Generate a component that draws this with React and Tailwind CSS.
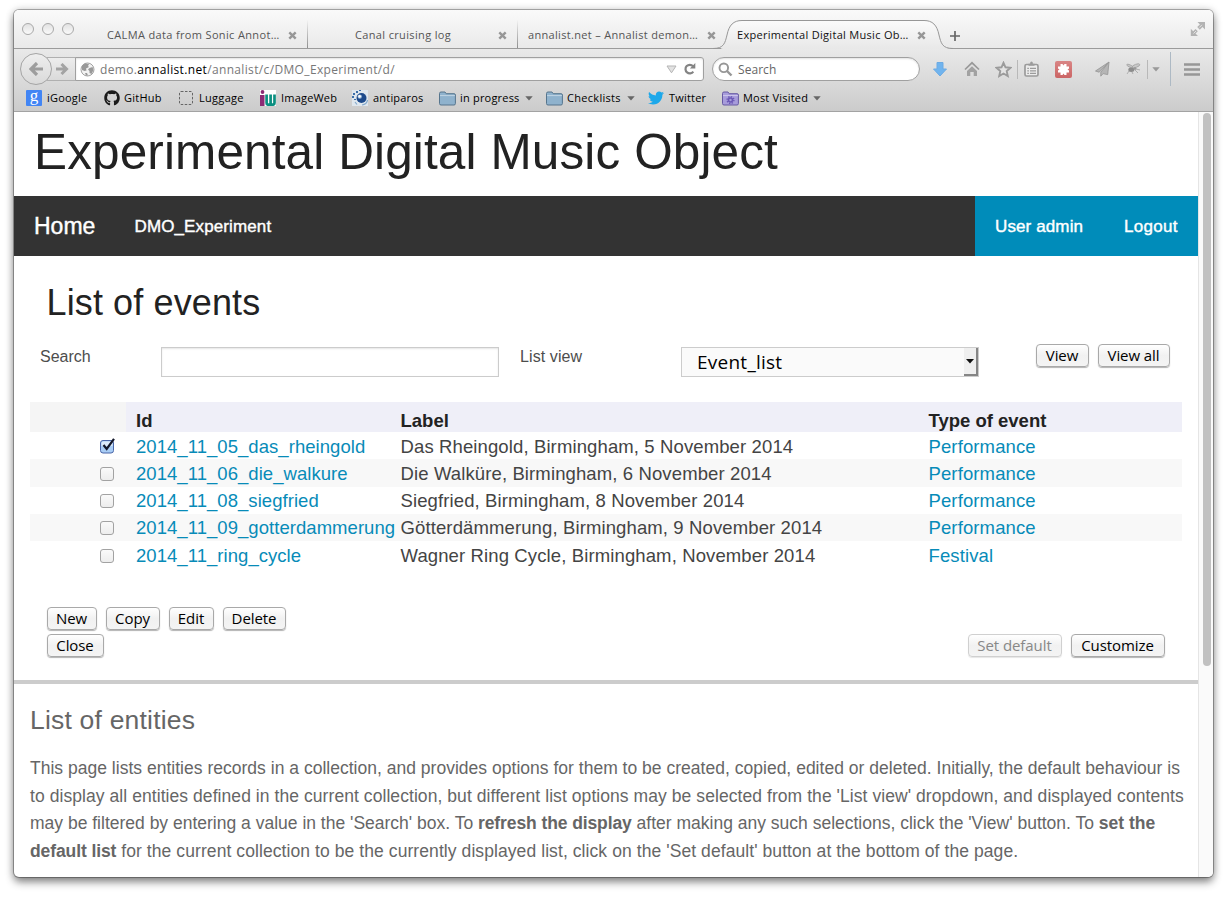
import React from "react";
import { FaGithub, FaTwitter } from "react-icons/fa";

const FolderIcon = ({ fill, stroke, gear }) => (
  <svg width="17" height="15" viewBox="0 0 17 15" className="shrink-0">
    <path d="M.5 12.5v-10q0-1.500 1.500-1.500h4l1.200 1.700H15q1.400 0 1.400 1.300v8.500q0 1.500-1.400 1.500H2q-1.500 0-1.500-1.500z" fill={fill} stroke={stroke} />
    <path d="M1 4.600h15" stroke="#fff" strokeOpacity=".45" />
    {gear && (
      <g fill="none" stroke="#6b58b5">
        <circle cx="8.500" cy="9" r="2" strokeWidth="1.600" />
        <circle cx="8.500" cy="9" r="3.400" strokeWidth="1.400" strokeDasharray="1.400 1.250" />
      </g>
    )}
  </svg>
);

const Caret = () => (
  <svg width="8" height="5" viewBox="0 0 8 5" className="shrink-0">
    <path d="M.3 .3h7.400L4 4.600z" fill="#666" />
  </svg>
);

const CloseX = () => (
  <svg width="9" height="9" viewBox="0 0 9 9" className="shrink-0">
    <path d="M1.300 1.300l6.400 6.400M7.700 1.300L1.300 7.700" stroke="#979797" strokeWidth="2.400" />
  </svg>
);

const Light = () => (
  <span className="h-3 w-3 rounded-full border border-[#a9a9a9] bg-linear-to-b from-[#e2e2e2] to-[#fafafa]" />
);

const TabDivider = () => (
  <span className="-mt-[12px] ml-auto h-[38px] w-px shrink-0 bg-linear-to-b from-transparent from-25% to-[#8f8f8f]" />
);

function TabStrip() {
  return (
    <div className="relative flex h-[39px] shrink-0 items-stretch border-b border-[#9b9b9b] text-[11px] text-[#555]">
      <div className="flex w-[93px] shrink-0 gap-2 pt-[13px] pl-[8px]">
        <Light /><Light /><Light />
      </div>
      <div className="flex w-[201px] shrink-0 items-center pt-[12px]">
        <span className="w-[181px] whitespace-nowrap tracking-[0.35px]">CALMA data from Sonic Annot…</span>
        <CloseX />
        <TabDivider />
      </div>
      <div className="flex w-[210px] shrink-0 items-center pt-[12px] pl-[47px]">
        <span className="w-[143px] whitespace-nowrap tracking-[0.35px]">Canal cruising log</span>
        <CloseX />
        <TabDivider />
      </div>
      <div className="flex w-[203px] shrink-0 items-center pt-[12px] pl-[10px]">
        <span className="w-[179px] whitespace-nowrap tracking-[0.32px]">annalist.net – Annalist demon…</span>
        <CloseX />
      </div>
      <div className="relative -ml-[8px] flex w-[240px] shrink-0 items-center pt-[12px] pl-[24px] text-[#111]">
        <svg width="246" height="39" viewBox="0 0 246 39" className="absolute top-0 left-0">
          <defs>
            <linearGradient id="tab" x1="0" y1="0" x2="0" y2="1">
              <stop offset="0" stopColor="#fbfbfb" />
              <stop offset="1" stopColor="#e8e8e8" />
            </linearGradient>
          </defs>
          <path d="M8 39v-.5C14 38 13 32 15 25C17 15 20.500 10.500 29 10.500H211C219.500 10.500 224 15 226 25C228 33 229 38.500 238 38.500V39z" fill="url(#tab)" />
          <path d="M0 38.500C11 38.500 12 33 14 25C16 15 20.500 10.500 29 10.500H211C219.500 10.500 224 15 226 25C228 33 229 38.500 240 38.500" fill="none" stroke="#979797" />
        </svg>
        <span className="relative w-[180px] whitespace-nowrap tracking-[0.3px]">Experimental Digital Music Ob…</span>
        <span className="relative"><CloseX /></span>
      </div>
      <svg width="10" height="10" viewBox="0 0 10 10" className="mt-[21px] -ml-[3px]">
        <path d="M5 0v10M0 5h10" stroke="#666" strokeWidth="1.700" />
      </svg>
      <svg width="16" height="16" viewBox="0 0 16 16" className="mt-[11px] mr-[7px] ml-auto">
        <path d="M7.500 1H15v7.500l-2.500-2.500L9.800 8.700 7.200 6.100l2.700-2.700zM8 15H.8V7.800L3.200 10.200 5.500 8l2.300 2.300L5.500 12.600z" fill="#b3b3b3" />
        <path d="M12 3.800L9.300 6.500M3.500 12.500L6 10" stroke="#e4e4e4" />
      </svg>
    </div>
  );
}

function AddressBar() {
  return (
    <div className="flex h-[40px] shrink-0 items-center text-[12px]">
      <div className="relative z-10 ml-[6px] flex h-8 w-8 shrink-0 items-center justify-center rounded-full border border-[#a5a5a5] bg-linear-to-b from-[#eee] to-[#dadada]">
        <svg width="15" height="14" viewBox="0 0 15 14">
          <path d="M14 7H3M8 1L2 7l6 6" fill="none" stroke="#9d9d9d" strokeWidth="3.200" />
        </svg>
      </div>
      <div className="-ml-[5px] flex h-6 w-[29px] shrink-0 items-center justify-end border-y border-[#b0b0b0] bg-linear-to-b from-[#ededed] to-[#dadada] pr-[7px]">
        <svg width="13" height="12" viewBox="0 0 13 12">
          <path d="M0 6h9M5.500 1l5 5-5 5" fill="none" stroke="#a3a3a3" strokeWidth="3" />
        </svg>
      </div>
      <div className="-ml-px flex h-6 w-[629px] shrink-0 items-center rounded-r-[3px] border border-[#a0a0a0] bg-white pl-[4px] shadow-[inset_0_1px_2px_rgba(0,0,0,0.12)]">
        <svg width="15" height="15" viewBox="0 0 15 15" className="shrink-0">
          <circle cx="7.500" cy="7.500" r="6.500" fill="#f2f2f2" stroke="#a3a3a3" />
          <path d="M2 4l3-2.500 4 .5-1 2 1 1-3 1.500.500 2-2 .5L2 8zM9.500 6l3-1 1 3-2 4-2-1V9L8 7.500zM5 11l2 0 1 2.500H6z" fill="#999" />
        </svg>
        <span className="ml-[5px] w-[566px] pt-px whitespace-nowrap tracking-[0.350px] text-[#777]">
          demo.<span className="text-black">annalist.net</span>/annalist/c/DMO_Experiment/d/
        </span>
        <svg width="11" height="9" viewBox="0 0 11 9" className="shrink-0">
          <path d="M1 1h9L5.500 7.800z" fill="#e2e2e2" stroke="#b5b5b5" />
        </svg>
        <svg width="14" height="14" viewBox="0 0 14 14" className="ml-[6px] shrink-0">
          <path d="M10.300 9.600A4.300 4.300 0 1 1 10 4.200" fill="none" stroke="#848484" strokeWidth="2.200" />
          <path d="M12.300 1v5.600H6.900z" fill="#848484" />
        </svg>
      </div>
      <div className="ml-[8px] flex h-6 w-[208px] shrink-0 items-center rounded-full border border-[#a0a0a0] bg-white pl-[5px] text-[#666] shadow-[inset_0_1px_2px_rgba(0,0,0,0.12)]">
        <svg width="15" height="15" viewBox="0 0 15 15" className="shrink-0">
          <circle cx="5.800" cy="5.800" r="4.300" fill="none" stroke="#979797" strokeWidth="1.900" />
          <path d="M9 9l4.500 4.500" stroke="#979797" strokeWidth="2.400" />
        </svg>
        <span className="ml-[5px] pt-px tracking-[0.050px]">Search</span>
      </div>
      <svg width="14" height="15" viewBox="0 0 14 15" className="ml-[13px] shrink-0">
        <path d="M4 .5h6V7h3.500L7 14 .5 7H4z" fill="#71b4ee" stroke="#6cabe4" />
      </svg>
      <svg width="16" height="16" viewBox="0 0 16 16" className="ml-[17px] shrink-0">
        <path d="M1 8.500L8 1.800l7 6.700" fill="none" stroke="#999" strokeWidth="1.700" />
        <path d="M3 10L8 5.200l5 4.800V15H9.700v-4H6.300v4H3z" fill="#a2a2a2" />
      </svg>
      <svg width="17" height="17" viewBox="0 0 17 17" className="ml-[15px] shrink-0">
        <path d="M8.500 1.800l2 4.500 4.900.5-3.700 3.300 1.100 4.900-4.300-2.500L4.200 15l1.100-4.900L1.600 6.800l4.900-.5z" fill="#e4e4e4" stroke="#9b9b9b" strokeWidth="1.900" />
      </svg>
      <span className="ml-[5px] h-[19px] w-px shrink-0 bg-[#b8b8b8]" />
      <svg width="15" height="16" viewBox="0 0 15 16" className="ml-[6px] shrink-0">
        <rect x="1" y="3.500" width="13" height="11.500" rx="1.500" fill="#ececec" stroke="#9b9b9b" strokeWidth="1.700" />
        <path d="M4.500 4.800V2.800h1.600Q6 .5 7.500.5T8.900 2.800h1.600v2z" fill="#9b9b9b" />
        <path d="M3.300 7.300h1.600M6 7.300h6M3.300 9.800h1.600M6 9.800h6M3.300 12.300h1.600M6 12.300h6" stroke="#9b9b9b" strokeWidth="1.300" />
      </svg>
      <span className="ml-[16px] flex h-[17px] w-[17px] shrink-0 items-center justify-center rounded-[2px] bg-linear-to-b from-[#d98585] to-[#cb6565]">
        <svg width="11" height="11" viewBox="0 0 11 11">
          <path d="M2.500 0h2l1 1.500 1-1.500h2v2.500H11v2L9.500 5.500 11 6.500v2H8.500V11h-2l-1-1.500-1 1.500h-2V8.500H0v-2l1.500-1L0 4.500v-2h2.500z" fill="#fff" />
        </svg>
      </span>
      <svg width="15" height="16" viewBox="0 0 15 16" className="ml-[23px] shrink-0">
        <path d="M14 1L.5 10l3.700 1.200zM14 1L5.800 11.200v4l2.300-2.600 4.600 1z" fill="#b5b5b5" stroke="#999" strokeWidth=".9" />
      </svg>
      <svg width="17" height="14" viewBox="0 0 17 14" className="ml-[15px] shrink-0">
        <g fill="none" stroke="#a2a2a2" strokeWidth=".8">
          <ellipse cx="11" cy="3.800" rx="4" ry="1.500" transform="rotate(-20 11 3.800)" fill="#c8c8c8" />
          <ellipse cx="5" cy="4" rx="3.300" ry="1.100" transform="rotate(25 5 3.500)" fill="#c8c8c8" />
          <path d="M4 9l-2 3M7 10l1 2M10 8l3 3M11 7l4 1" />
        </g>
        <ellipse cx="6.300" cy="7.800" rx="3" ry="2.200" fill="#8c8c8c" />
        <circle cx="10" cy="6.600" r="1.400" fill="#999" />
      </svg>
      <span className="ml-[5px] h-[19px] w-px shrink-0 bg-[#b8b8b8]" />
      <svg width="8" height="5" viewBox="0 0 8 5" className="ml-[4px] shrink-0"><path d="M.3 .3h7.400L4 4.500z" fill="#999" /></svg>
      <span className="ml-[10px] h-[34px] w-px shrink-0 bg-[#adb9c4]" />
      <svg width="16" height="13" viewBox="0 0 16 13" className="ml-[13px] shrink-0">
        <path d="M0 1.500h16M0 6.500h16M0 11.500h16" stroke="#979797" strokeWidth="2.400" />
      </svg>
    </div>
  );
}

function Bookmarks() {
  return (
    <div className="flex h-[23px] shrink-0 items-center border-b border-[#a3a3a3] pb-[4px] text-[11px] tracking-[0.2px] whitespace-nowrap text-black">
      <div className="flex w-[78px] shrink-0 items-center gap-[5px] pl-[12px]">
        <span className="flex h-4 w-4 shrink-0 items-center justify-center rounded-[1px] bg-[#4285f4] pb-[4px] font-['Liberation_Serif',serif] text-[17px] leading-4 text-white">g</span>
        iGoogle
      </div>
      <div className="flex w-[75px] shrink-0 items-center gap-[4px] pl-[12px] tracking-[0.250px]">
        <FaGithub className="h-4 w-4 shrink-0 text-[#1b1b1b]" />GitHub
      </div>
      <div className="flex w-[80px] shrink-0 items-center gap-[6px] pl-[12px] tracking-[0.300px]">
        <svg width="14" height="14" viewBox="0 0 14 14" className="shrink-0"><rect x=".5" y=".5" width="13" height="13" rx="1.500" fill="none" stroke="#666" strokeDasharray="2.500 1.500" /></svg>
        Luggage
      </div>
      <div className="flex w-[92px] shrink-0 items-center gap-[5px] pl-[13px]">
        <svg width="16" height="16" viewBox="0 0 16 16" className="shrink-0">
          <rect width="16" height="16" fill="#fff" />
          <circle cx="2.500" cy="2" r="1.900" fill="#8c2b75" />
          <path d="M0 5h4.500v11H0z" fill="#8c2b75" />
          <path d="M6.600 4.500V13Q6.600 14.700 8.200 14.700H9Q10.600 14.700 10.600 13V4.500M10.600 13Q10.600 14.700 12 14.700H12.800Q14.500 14.700 14.500 13V4.500" fill="none" stroke="#0b8f80" strokeWidth="2.700" />
        </svg>
        ImageWeb
      </div>
      <div className="flex w-[88px] shrink-0 items-center gap-[5px] pl-[13px]">
        <svg width="16" height="16" viewBox="0 0 16 16" className="shrink-0">
          <rect width="16" height="16" fill="#dfe7ee" />
          <circle cx="9.500" cy="8" r="5" fill="#1d4a8c" />
          <circle cx="7.800" cy="6.600" r="2.200" fill="#8fb0d2" />
          <circle cx="7.600" cy="6.400" r="1.300" fill="#fff" />
          <path d="M1 3h2v2H1zM4 1h2v2H4zM0 6h2v2H0zM2 9h2v1H2zM7 0h2v1H7z" fill="#3d6fa8" />
          <path d="M3 12l2 2.500M10 15q5-1 5.500-5" fill="none" stroke="#84a9cc" strokeWidth="1.200" />
        </svg>
        antiparos
      </div>
      <div className="flex w-[107px] shrink-0 items-center gap-[4px] pl-[12px]">
        <FolderIcon fill="#8fb2cd" stroke="#56758d" />
        <span className="w-[61px] tracking-[0.200px]">in progress</span><Caret />
      </div>
      <div className="flex w-[102px] shrink-0 items-center gap-[4px] pl-[12px]">
        <FolderIcon fill="#8fb2cd" stroke="#56758d" />
        <span className="w-[56px] tracking-[0.300px]">Checklists</span><Caret />
      </div>
      <div className="flex w-[74px] shrink-0 items-center gap-[5px] pl-[12px]">
        <FaTwitter className="h-4 w-4 shrink-0 text-[#1da8ea]" />Twitter
      </div>
      <div className="flex shrink-0 items-center gap-[4px] pl-[12px]">
        <FolderIcon fill="#a79cdb" stroke="#6659a3" gear />
        <span className="w-[66px] tracking-[0.200px]">Most Visited</span><Caret />
      </div>
    </div>
  );
}

const Button = ({ children, className, disabled }) => (
  <button
    disabled={disabled}
    className={
      "flex h-[23px] shrink-0 items-center justify-center rounded-[4px] border border-[#a9a9a9] bg-linear-to-b from-white via-[#f1f1f1] via-50% to-[#f4f4f4] pr-px pb-px font-['Open_Sans','Noto_Sans',sans-serif] text-[15px] leading-5 tracking-[-0.080px] whitespace-nowrap text-black shadow-[0_1px_1px_rgba(0,0,0,0.3)] disabled:border-[#d0d0d0] disabled:text-[#888] disabled:shadow-[0_1px_1px_rgba(0,0,0,0.1)] " +
      className
    }
  >
    {children}
  </button>
);

const Checkbox = ({ checked }) =>
  checked ? (
    <svg width="17" height="17" viewBox="0 0 17 17" className="-mt-[3px] -mr-[2px] shrink-0">
      <rect x="1.500" y="3.500" width="13" height="12.500" rx="2.500" fill="#a9cdf5" stroke="#4a66a8" />
      <path d="M2.500 6q0-1.500 2-1.500h7q2 0 2 1.500v3h-11z" fill="#dcebfb" />
      <path d="M4.500 8l3.200 4L15 1.800" fill="none" stroke="#14182a" strokeWidth="2.200" />
    </svg>
  ) : (
    <span className="h-[14px] w-[14px] shrink-0 rounded-[3px] border border-[#a2a2a2] bg-linear-to-b from-[#fafafa] to-[#ededed]" />
  );

const rows = [
  { id: "2014_11_05_das_rheingold", label: "Das Rheingold, Birmingham, 5 November 2014", type: "Performance", cls: "h-[27px] pt-[2px]", checked: true },
  { id: "2014_11_06_die_walkure", label: "Die Walküre, Birmingham, 6 November 2014", type: "Performance", cls: "h-[28px] bg-[#f8f8f8] pt-[2px]" },
  { id: "2014_11_08_siegfried", label: "Siegfried, Birmingham, 8 November 2014", type: "Performance", cls: "h-[27px]" },
  { id: "2014_11_09_gotterdammerung", label: "Götterdämmerung, Birmingham, 9 November 2014", type: "Performance", cls: "h-[27px] bg-[#f8f8f8]" },
  { id: "2014_11_ring_cycle", label: "Wagner Ring Cycle, Birmingham, November 2014", type: "Festival", cls: "h-[28px] pt-px" },
];

function Page() {
  return (
    <main className="w-[1184px] shrink-0 font-['Liberation_Sans',Arial,sans-serif]">
      <h1 className="h-[84px] pl-[20px] text-[49.500px] leading-[80px] tracking-[0.120px] whitespace-nowrap text-[#222]">Experimental Digital Music Object</h1>
      <nav className="flex h-[60px] items-center bg-[#333] text-[17px] whitespace-nowrap text-white">
        <a className="w-[120.5px] pl-[20px] text-[23px] [-webkit-text-stroke:0.4px]">Home</a>
        <a className="pt-px tracking-[0.120px] [-webkit-text-stroke:0.4px]">DMO_Experiment</a>
        <div className="ml-auto flex h-full w-[223px] items-center bg-[#008cba] pt-px pl-[20px] tracking-[0.120px] [-webkit-text-stroke:0.4px]">
          <a className="w-[129px]">User admin</a>
          <a className="tracking-[0.300px]">Logout</a>
        </div>
      </nav>
      <h2 className="h-[88px] pt-[23px] pl-[32.500px] text-[36px] leading-[48px] tracking-[0.120px] whitespace-nowrap text-[#222]">List of events</h2>
      <div className="flex h-[58px] items-start pl-[26px] text-[16px] text-[#4d4d4d]">
        <label className="w-[121px] pt-[2px] leading-[22px]">Search</label>
        <div className="mt-[3px] h-[30px] w-[338px] border border-[#ccc] bg-white shadow-[inset_0_1px_2px_rgba(0,0,0,0.1)]" />
        <label className="ml-[21px] w-[161px] pt-[2px] leading-[22px] tracking-[0.100px]">List view</label>
        <div className="mt-[3px] flex h-[30px] w-[298px] items-center justify-between border border-[#ccc] bg-[#fafafa] pl-[15px] font-['Open_Sans','Noto_Sans',sans-serif] text-[19px] text-black">
          <span className="tracking-[0.250px]">Event_list</span>
          <span className="flex h-[28px] w-[14px] items-center justify-center border-r-2 border-b-2 border-[#858585] bg-[#efefef]">
            <svg width="8" height="5" viewBox="0 0 8 5"><path d="M0 0h8L4 4.500z" fill="#111" /></svg>
          </span>
        </div>
        <div className="ml-[57px] flex gap-[9px]">
          <Button className="w-[53px]">View</Button>
          <Button className="w-[72px]">View all</Button>
        </div>
      </div>
      <div className="ml-[16px] w-[1152px] text-[18.500px] whitespace-nowrap text-[#444]">
        <div className="flex h-[30px] bg-[#efeff8] leading-[37px] font-bold text-[#222]">
          <span className="w-[96px] bg-[#f5f5f5]" />
          <span className="w-[274.500px] pl-[10px]">Id</span>
          <span className="w-[528px]">Label</span>
          <span>Type of event</span>
        </div>
        {rows.map((r) => (
          <div key={r.id} className={"flex items-center " + r.cls}>
            <span className="flex w-[84px] justify-end"><Checkbox checked={r.checked} /></span>
            <a className="w-[286.500px] pl-[22px] tracking-[0.050px] text-[#078bb8]">{r.id}</a>
            <span className="w-[528px] tracking-[0.120px]">{r.label}</span>
            <a className="tracking-[0.120px] text-[#078bb8]">{r.type}</a>
          </div>
        ))}
      </div>
      <div className="flex flex-col gap-[4px] pt-[38px] pr-[33px] pl-[33px]">
        <div className="flex gap-[9px]">
          <Button className="w-[50px]">New</Button>
          <Button className="w-[54px]">Copy</Button>
          <Button className="w-[45px]">Edit</Button>
          <Button className="w-[63px]">Delete</Button>
        </div>
        <div className="flex gap-[9px]">
          <Button className="mr-auto w-[57px]">Close</Button>
          <Button className="w-[94px]" disabled>Set default</Button>
          <Button className="w-[94px]">Customize</Button>
        </div>
      </div>
      <section className="mt-[23px] border-t-4 border-[#ccc] pl-[16px] text-[#666]">
        <h3 className="h-[71px] pt-[20px] text-[26.500px] leading-8 tracking-[0.200px]">List of entities</h3>
        <p className="text-[17.500px] leading-[27.500px] whitespace-nowrap">
          <span className="tracking-[0.015px]">This page lists entities records in a collection, and provides options for them to be created, copied, edited or deleted. Initially, the default behaviour is</span><br />
          <span className="tracking-[0.066px]">to display all entities defined in the current collection, but different list options may be selected from the 'List view' dropdown, and displayed contents</span><br />
          <span>may be filtered by entering a value in the 'Search' box. To <b className="tracking-[-0.100px]">refresh the display</b> after making any such selections, click the 'View' button. To <b>set the</b></span><br />
          <span className="tracking-[0.080px]"><b className="tracking-[-0.100px]">default list</b> for the current collection to be the currently displayed list, click on the 'Set default' button at the bottom of the page.</span>
        </p>
      </section>
    </main>
  );
}

export default function App() {
  return (
    <div className="h-[897px] w-[1227px] overflow-hidden bg-white pt-[10px] pl-[14px] font-['Open_Sans','Noto_Sans',sans-serif]">
      <div className="flex h-[867px] w-[1199px] flex-col overflow-hidden rounded-[5px] bg-white shadow-[0_0_0_1px_rgba(0,0,0,0.28),0_5px_9px_rgba(0,0,0,0.45),0_0_8px_rgba(0,0,0,0.2)]">
        <header className="flex h-[102px] shrink-0 flex-col bg-linear-to-b from-[#fafafa] via-[#e6e6e6] via-45% to-[#cbcbcb]">
          <TabStrip />
          <AddressBar />
          <Bookmarks />
        </header>
        <div className="flex min-h-0 flex-1">
          <Page />
          <div className="flex w-[15px] shrink-0 justify-center border-l border-[#e5e5e5] bg-[#fafafa] pt-[1px] pl-px">
            <div className="h-[553px] w-2 rounded-full bg-[#c1c1c1]" />
          </div>
        </div>
      </div>
    </div>
  );
}
